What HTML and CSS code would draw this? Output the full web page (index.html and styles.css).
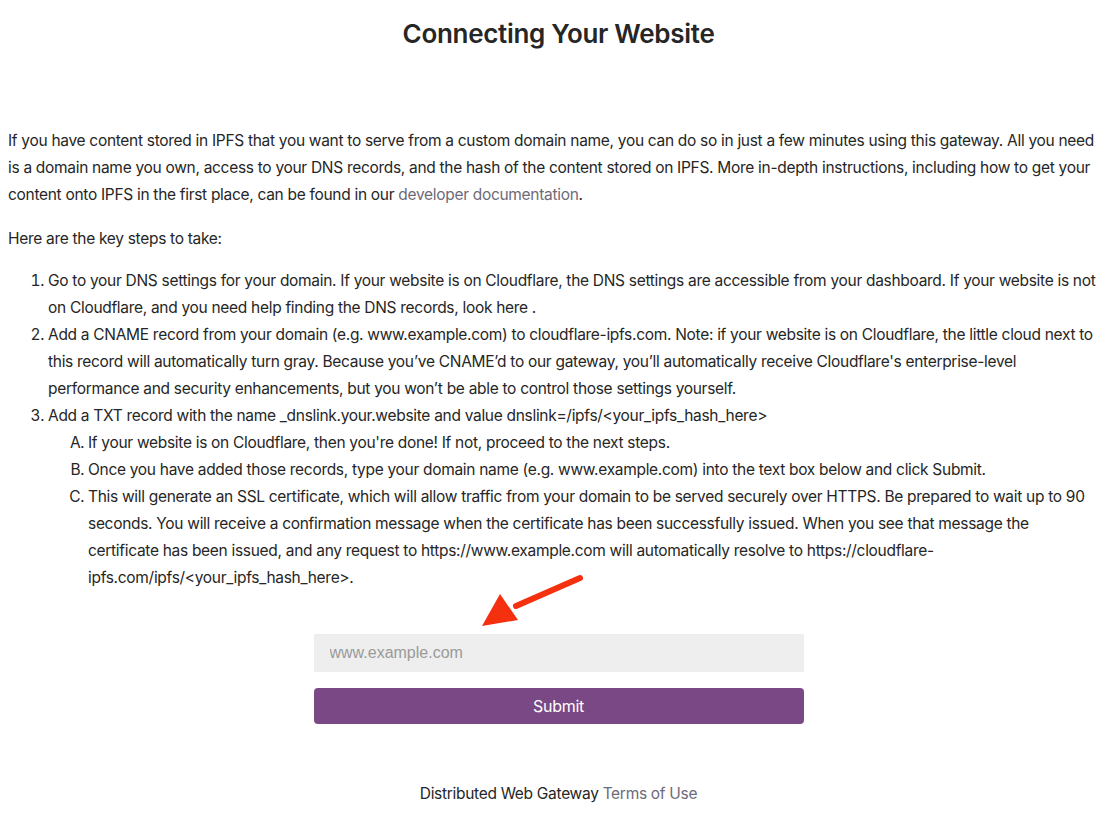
FILE: index.html
```html
<!DOCTYPE html>
<html>
<head>
<meta charset="utf-8">
<link rel="stylesheet" href="styles.css">
</head>
<body>
<div class="page">
  <h1 class="title">Connecting Your Website</h1>
  <p class="intro">If you have content stored in IPFS that you want to serve from a custom domain name, you can do so in just a few minutes using this gateway. All you need is a domain name you own, access to your DNS records, and the hash of the content stored on IPFS. More in-depth instructions, including how to get your content onto IPFS in the first place, can be found in our <a class="link" href="#">developer documentation</a>.</p>
  <p class="lead">Here are the key steps to take:</p>
  <ol class="steps">
    <li>Go to your DNS settings for your domain. If your website is on Cloudflare, the DNS settings are accessible from your dashboard. If your website is not on Cloudflare, and you need help finding the DNS records, look here .</li>
    <li>Add a CNAME record from your domain (e.g. www.example.com) to cloudflare-ipfs.com. Note: if your website is on Cloudflare, the little cloud next to this record will automatically turn gray. Because you’ve CNAME’d to our gateway, you’ll automatically receive Cloudflare's enterprise-level performance and security enhancements, but you won’t be able to control those settings yourself.</li>
    <li>Add a TXT record with the name _dnslink.your.website and value dnslink=/ipfs/&lt;your_ipfs_hash_here&gt;
      <ol class="substeps">
        <li>If your website is on Cloudflare, then you're done! If not, proceed to the next steps.</li>
        <li>Once you have added those records, type your domain name (e.g. www.example.com) into the text box below and click Submit.</li>
        <li>This will generate an SSL certificate, which will allow traffic from your domain to be served securely over HTTPS. Be prepared to wait up to 90 seconds. You will receive a confirmation message when the certificate has been successfully issued. When you see that message the certificate has been issued, and any request to https://www.example.com will automatically resolve to https://cloudflare-ipfs.com/ipfs/&lt;your_ipfs_hash_here&gt;.</li>
      </ol>
    </li>
  </ol>
  <form class="form">
    <svg class="arrow" width="110" height="60" viewBox="0 0 110 60">
      <path d="M104 6 L40 34" stroke="#f4300f" stroke-width="6" stroke-linecap="round" fill="none"/>
      <polygon points="6,54 24,22 42,48" fill="#f4300f"/>
    </svg>
    <input class="domain" type="text" placeholder="www.example.com">
    <button class="submit" type="button">Submit</button>
  </form>
  <footer class="footer">Distributed Web Gateway <a class="link" href="#">Terms of Use</a></footer>
</div>
</body>
</html>
```
FILE: styles.css
```css
html, body {
  margin: 0;
  padding: 0;
  background: #ffffff;
}
body {
  font-family: Inter, "Noto Sans", sans-serif;
  color: #262626;
  font-size: 15.5px;
  line-height: 27px;
  letter-spacing: -0.3px;
}
.page {
  padding: 0 8px;
}
.title {
  margin: 0;
  padding-top: 16px;
  text-align: center;
  font-size: 26px;
  line-height: 36px;
  font-weight: 600;
  color: #262626;
  letter-spacing: -0.3px;
}
.intro {
  margin: 75px 0 0 0;
}
.lead {
  margin: 17px 0 0 0;
}
.link {
  color: #6e6a78;
  text-decoration: none;
}
.steps {
  margin: 15px 0 0 0;
  padding-left: 40px;
}
.substeps {
  margin: 0;
  padding-left: 40px;
  padding-right: 6px;
  list-style-type: upper-alpha;
}
.form {
  position: relative;
  width: 490px;
  margin: 43px auto 0 auto;
  display: flex;
  flex-direction: column;
  gap: 16px;
}
.arrow {
  position: absolute;
  left: 162px;
  top: -62px;
}
.domain {
  height: 38px;
  box-sizing: border-box;
  border: none;
  background: #eeeeee;
  padding: 0 16px;
  font-family: "Liberation Sans", Arial, sans-serif;
  font-size: 16px;
  color: #333;
  outline: none;
}
.domain::placeholder {
  color: #9a9a9a;
}
.submit {
  height: 36px;
  border: none;
  border-radius: 4px;
  background: #7b4886;
  color: #ffffff;
  font-family: Inter, "Noto Sans", sans-serif;
  font-size: 16px;
  letter-spacing: -0.3px;
}
.footer {
  text-align: center;
  margin-top: 56px;
}
```
